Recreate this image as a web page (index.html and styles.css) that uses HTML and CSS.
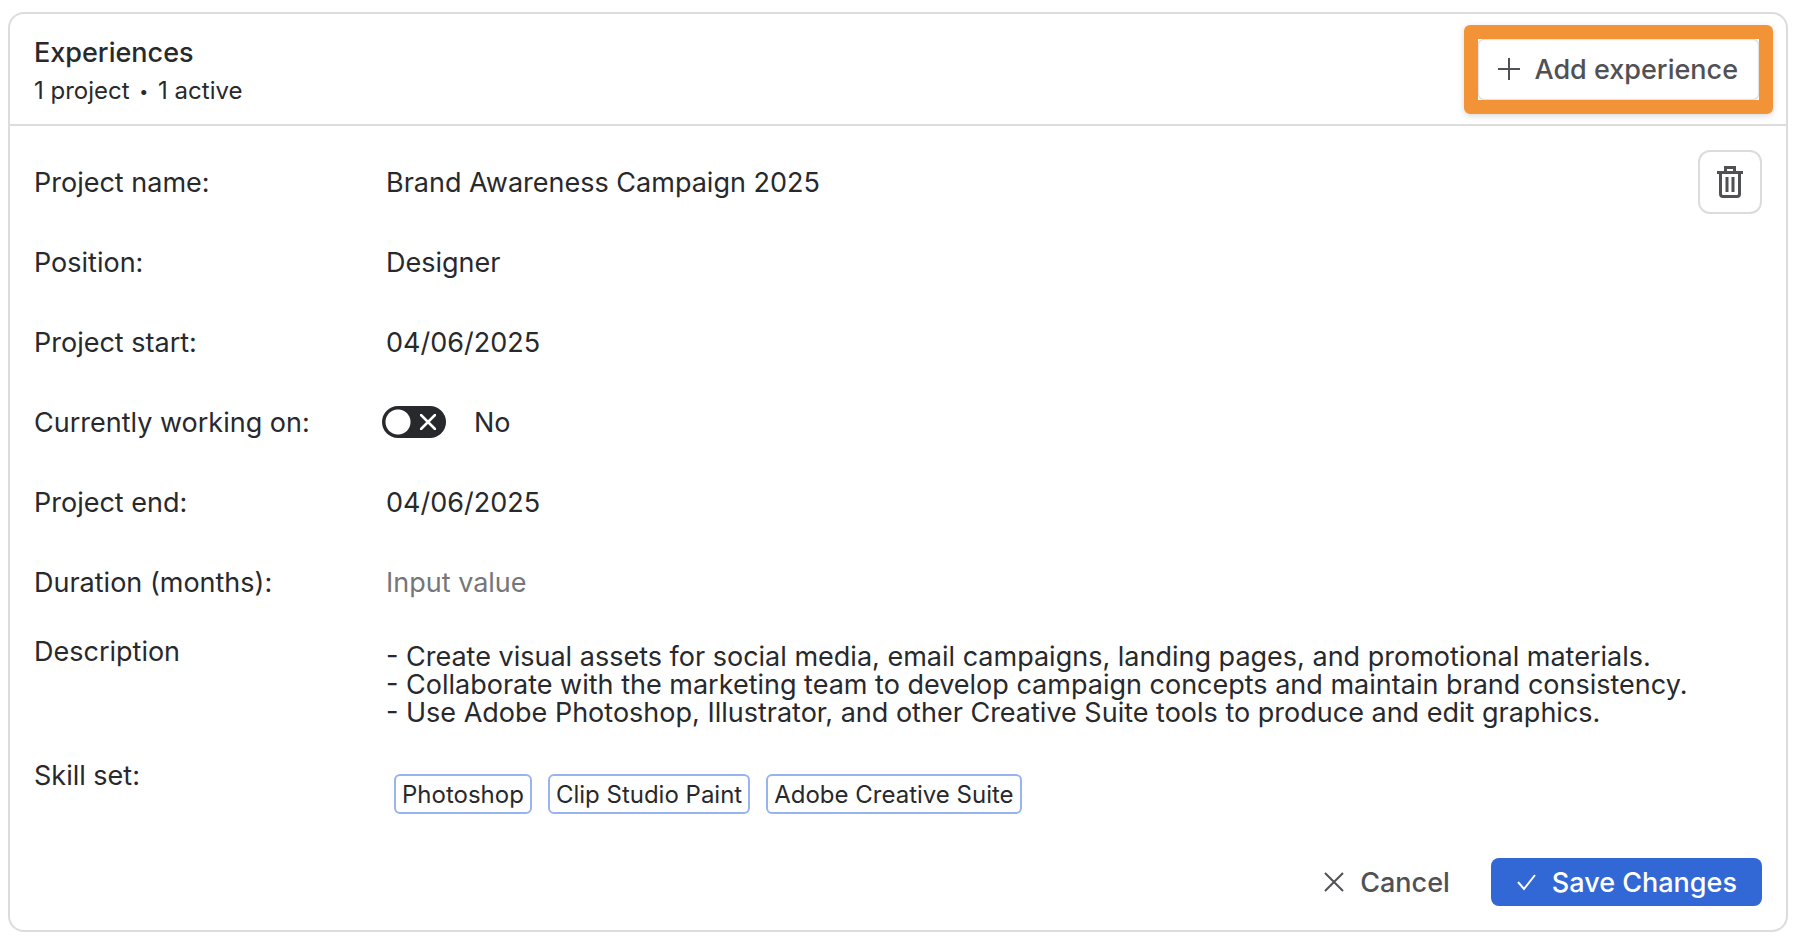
FILE: index.html
```html
<!DOCTYPE html>
<html lang="en">
<head>
    <meta charset="UTF-8">
    <meta name="viewport" content="width=device-width, initial-scale=1.0">
    <title>Experiences</title>
    <link rel="stylesheet" href="styles.css">
</head>
<body>
<form class="card">
    <header class="card-header">
        <div class="card-heading">
            <h2>Experiences</h2>
            <p>1 project <span class="dot">•</span> 1 active</p>
        </div>
        <div class="highlight">
            <button type="button" class="btn btn-add">
                <svg width="22" height="22" viewBox="0 0 22 22" fill="none" stroke="currentColor" stroke-width="2"><path d="M11 0v22M0 11h22"/></svg>
                Add experience
            </button>
        </div>
    </header>

    <div class="card-body">
        <div class="row">
            <label for="projectName">Project name:</label>
            <input type="text" id="projectName" value="Brand Awareness Campaign 2025">
            <button type="button" class="btn-delete" aria-label="Delete experience">
                <svg width="26" height="32" viewBox="0 0 26 32" fill="none" stroke="currentColor" stroke-width="3"><path d="M0 6.500h26"/><path d="M8.500 6V1.500h9V6"/><path d="M3.500 7v21q0 2.500 2.500 2.500h14q2.500 0 2.500-2.500V7"/><path d="M10 11v15M16 11v15"/></svg>
            </button>
        </div>
        <div class="row">
            <label for="position">Position:</label>
            <input type="text" id="position" value="Designer">
        </div>
        <div class="row">
            <label for="projectStart">Project start:</label>
            <input type="text" id="projectStart" value="04/06/2025">
        </div>
        <div class="row">
            <label for="working">Currently working on:</label>
            <div class="switch-field">
                <span class="switch">
                    <input type="checkbox" id="working">
                    <svg width="16" height="16" viewBox="0 0 16 16" fill="none" stroke="#fff" stroke-width="2.500" stroke-linecap="round"><path d="M1 1l14 14M15 1L1 15"/></svg>
                </span>
                <span>No</span>
            </div>
        </div>
        <div class="row">
            <label for="projectEnd">Project end:</label>
            <input type="text" id="projectEnd" value="04/06/2025">
        </div>
        <div class="row">
            <label for="duration">Duration (months):</label>
            <input type="text" id="duration" placeholder="Input value">
        </div>
        <div class="row row-top">
            <label for="description">Description</label>
            <textarea id="description" rows="3">- Create visual assets for social media, email campaigns, landing pages, and promotional materials.
- Collaborate with the marketing team to develop campaign concepts and maintain brand consistency.
- Use Adobe Photoshop, Illustrator, and other Creative Suite tools to produce and edit graphics.</textarea>
        </div>
        <div class="row row-top">
            <span>Skill set:</span>
            <ul class="tags">
                <li>Photoshop</li>
                <li>Clip Studio Paint</li>
                <li>Adobe Creative Suite</li>
            </ul>
        </div>
    </div>

    <footer class="card-footer">
        <button type="button" class="btn btn-cancel">
            <svg width="20" height="20" viewBox="0 0 20 20" fill="none" stroke="currentColor" stroke-width="2"><path d="M1 1l18 18M19 1L1 19"/></svg>
            Cancel
        </button>
        <button type="submit" class="btn btn-save">
            <svg width="20" height="20" viewBox="0 0 20 20" fill="none" stroke="currentColor" stroke-width="2"><path d="M2 10l6 7L19 3"/></svg>
            Save Changes
        </button>
    </footer>
</form>
</body>
</html>
```
FILE: styles.css
```css
* {
    margin: 0;
    padding: 0;
    box-sizing: border-box;
}

body {
    background-color: #fff;
    color: #28292c;
    font-family: Inter, "Liberation Sans", sans-serif;
    font-size: 27px;
    line-height: 35px;
    padding: 12px 16px 20px 8px;
}

input, textarea, button {
    font: inherit;
    color: inherit;
    border: none;
    background: none;
}

button {
    cursor: pointer;
}

.card {
    border: 2px solid #dcdcdc;
    border-radius: 16px;
}

.card-header {
    display: flex;
    justify-content: space-between;
    align-items: center;
    min-height: 112px;
    padding: 0 13px 0 24px;
    border-bottom: 2px solid #dcdcdc;
}

.card-heading {
    padding-top: 4px;
}

.card-heading h2 {
    font-size: 27px;
    font-weight: 500;
}

.card-heading p {
    font-size: 24px;
    line-height: 32px;
    margin-top: 5px;
}

.dot {
    display: inline-block;
    font-size: 16px;
    line-height: 16px;
    margin: 0 3px;
    vertical-align: 2px;
}

.highlight {
    border: 14px solid #f19336;
    border-radius: 6px;
    box-shadow: 0 2px 6px rgba(0, 0, 0, 0.15);
}

.btn {
    display: flex;
    align-items: center;
    font-weight: 500;
    color: #505155;
}

.btn-add {
    gap: 14px;
    padding: 13px 21px 13px 20px;
    border-radius: 6px;
    box-shadow: inset 0 0 2px rgba(0, 0, 0, 0.4);
}

.card-body {
    padding: 16px 24px 0;
}

.row {
    display: grid;
    grid-template-columns: 352px 1fr auto;
    align-items: center;
    min-height: 80px;
}

.row input[type="text"] {
    width: 100%;
    height: 48px;
}

.row input::placeholder {
    color: #757679;
    opacity: 1;
}

.btn-delete {
    display: flex;
    align-items: center;
    justify-content: center;
    width: 64px;
    height: 64px;
    border: 2px solid #dcdcdc;
    border-radius: 12px;
    color: #505155;
}

.switch-field {
    display: flex;
    align-items: center;
    gap: 28px;
    margin-left: -4px;
}

.switch {
    display: flex;
    position: relative;
}

.switch input {
    appearance: none;
    width: 64px;
    height: 32px;
    border-radius: 16px;
    background: radial-gradient(circle at 16px 16px, #fff 12px, #28292c 13px);
    cursor: pointer;
}

.switch svg {
    position: absolute;
    top: 8px;
    right: 10px;
    pointer-events: none;
}

.row-top {
    align-items: start;
    min-height: 124px;
    padding-top: 12px;
}

.row-top:last-child {
    min-height: 112px;
}

.row-top textarea {
    display: block;
    width: 100%;
    line-height: 28px;
    margin-top: 9px;
    padding-bottom: 8px;
    resize: none;
    overflow: hidden;
}

.tags {
    display: flex;
    flex-wrap: wrap;
    gap: 16px;
    padding: 16px 8px 0;
    list-style: none;
}

.tags li {
    border: 2px solid #98b4ee;
    border-radius: 6px;
    padding: 3px 6px 1px;
    font-size: 24px;
    line-height: 32px;
}

.card-footer {
    display: flex;
    justify-content: flex-end;
    gap: 16px;
    padding: 0 24px 24px;
}

.card-footer .btn {
    height: 48px;
    border-radius: 8px;
    padding: 0 25px;
    gap: 16px;
}

.card-footer .btn-save {
    background-color: #3267d6;
    color: #fff;
}
```
